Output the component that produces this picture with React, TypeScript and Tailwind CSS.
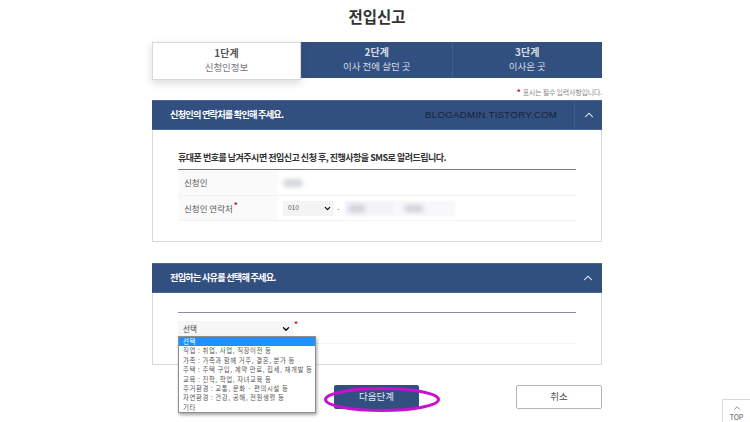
import { ChevronDown, ChevronUp } from "lucide-react"

const font = "font-['Noto_Sans_CJK_KR','Noto_Sans',sans-serif]"

const reasons = [
  "직업 : 취업, 사업, 직장이전 등",
  "가족 : 가족과 함께 거주, 결혼, 분가 등",
  "주택 : 주택 구입, 계약 만료, 집세, 재개발 등",
  "교육 : 진학, 학업, 자녀교육 등",
  "주거환경 : 교통, 문화 · 편의시설 등",
  "자연환경 : 건강, 공해, 전원생활 등",
  "기타",
]

function SectionHeader({ title, toggleLine }: { title: string; toggleLine?: boolean }) {
  return (
    <div className="flex h-[30px] items-center justify-between bg-[#32507f] pl-[18px] border-y border-[#4a6592]">
      <span className="text-[9.2px] font-bold tracking-[-0.8px] text-white">{title}</span>
      <div className={`flex h-full w-[28px] items-center justify-center ${toggleLine ? "border-l border-[#3f5c8a]" : ""}`}>
        <ChevronUp className="h-[14px] w-[14px] text-white" strokeWidth={1.8} />
      </div>
    </div>
  )
}

function Tab({ step, label }: { step: string; label: string }) {
  return (
    <div className="flex h-[36px] flex-1 flex-col items-center justify-center border-l border-[#3f5c8a] pb-[2px] leading-[14.2px] text-[#d5dce8]">
      <span className="text-[10px] font-bold">{step}</span>
      <span className="text-[9.5px]">{label}</span>
    </div>
  )
}

export default function App() {
  return (
    <div className={`relative h-[422px] w-[750px] overflow-hidden bg-white ${font}`}>
      <div className="ml-[152px] w-[450px]">
        <h1 className="pt-[4px] text-center text-[15.5px] font-bold leading-[24px] text-[#333]">전입신고</h1>

        {/* step tabs */}
        <div className="mt-[14px] flex h-[38px] items-start">
          <div className="z-10 flex h-[38px] w-[149px] flex-col items-center justify-center border border-[#d8d8d8] bg-white pb-[2px] leading-[14.2px] shadow-[0_3px_8px_rgba(0,0,0,0.15)]">
            <span className="text-[10px] font-bold text-[#555]">1단계</span>
            <span className="text-[9.5px] text-[#777]">신청인정보</span>
          </div>
          <div className="flex flex-1 bg-[#32507f]">
            <Tab step="2단계" label="이사 전에 살던 곳" />
            <Tab step="3단계" label="이사온 곳" />
          </div>
        </div>

        <div className="mt-[6px] flex h-[13px] items-center justify-end text-[7px] tracking-[-0.2px] text-[#888]">
          <span className="mr-[2px] -translate-y-[1px] text-[8px] font-bold text-[#d0021b]">*</span>
          표시는 필수 입력사항입니다.
        </div>

        {/* contact section */}
        <section className="mt-[1px]">
          <SectionHeader title="신청인의 연락처를 확인해 주세요." toggleLine />
          <div className="h-[112px] border border-t-0 border-[#d8d8d8] bg-white px-[25px] pt-[21px]">
            <p className="text-[9px] font-bold leading-[13px] tracking-[-0.5px] text-[#333]">
              휴대폰 번호를 남겨주시면 전입신고 신청 후, 진행사항을 SMS로 알려드립니다.
            </p>
            <div className="mt-[5px] border-t border-[#6f7592]">
              <div className="flex h-[26px] items-center border-b border-[#f2f2f2]">
                <div className="flex h-full w-[100px] items-center bg-[#fafafa] pl-[6px] text-[8.5px] text-[#555]">신청인</div>
                <div className="ml-[5px] h-[8px] w-[20px] rounded-sm bg-[#d4d7dc] blur-[2px]" />
              </div>
              <div className="flex h-[25px] items-center border-b border-[#f2f2f2]">
                <div className="flex h-full w-[100px] items-center bg-[#fafafa] pl-[6px] text-[8.5px] text-[#555]">
                  신청인 연락처
                  <span className="ml-[1px] -translate-y-[3px] text-[8px] font-bold text-[#d0021b]">*</span>
                </div>
                <div className="ml-[5px] flex h-[15px] w-[51px] items-center justify-between bg-[#f4f4f4] pl-[5px] pr-[2px] text-[6.5px] text-[#555]">
                  010
                  <ChevronDown className="h-[9px] w-[9px] text-black" strokeWidth={3} />
                </div>
                <span className="mx-[3px] text-[7px] text-[#666]">-</span>
                <div className="ml-[3px] flex h-[15px] w-[50px] items-center bg-[#f2f4f7] pl-[4px] blur-[1px]">
                  <div className="h-[7px] w-[16px] bg-[#cdd1d8] blur-[2px]" />
                </div>
                <div className="flex h-[15px] w-[60px] items-center bg-[#f7f8fa] pl-[10px] blur-[1px]">
                  <div className="h-[7px] w-[18px] bg-[#cdd1d8] blur-[2px]" />
                </div>
              </div>
            </div>
          </div>
        </section>

        {/* reason section */}
        <section className="mt-[21px]">
          <SectionHeader title="전입하는 사유를 선택해 주세요." />
          <div className="h-[72px] border border-t-0 border-[#d8d8d8] bg-white px-[25px] pt-[19px]">
            <div className="border-t border-[#8a8aa5]" />
            <div className="mt-[8px] flex h-[23px] items-start border-b border-[#f5f5f5]">
              <div className="flex h-[15px] w-[115px] items-center justify-between bg-[#f6f6f6] pl-[5px] pr-[2px] text-[7.5px] text-[#444]">
                선택
                <ChevronDown className="h-[10px] w-[10px] text-black" strokeWidth={3} />
              </div>
              <span className="ml-[1px] -translate-y-[3px] text-[8px] font-bold text-[#d0021b]">*</span>
            </div>
          </div>
        </section>

        {/* buttons */}
        <div className="mt-[20px] flex h-[24px] justify-end">
          <button className="flex h-[24px] w-[85px] items-center justify-center rounded-[2px] bg-[#32507f] pb-[2px] text-[9.5px] text-[#e6ebf3]">
            다음단계
          </button>
          <button className="ml-[97px] flex h-[24px] w-[86px] items-center justify-center rounded-[2px] border border-[#b5b5b5] bg-white pb-[2px] text-[9.5px] text-[#555]">
            취소
          </button>
        </div>
      </div>

      {/* open dropdown */}
      <ul className="absolute left-[178px] top-[336px] w-[138px] border border-[#8f8f8f] bg-white text-[6.4px] leading-[9.4px] tracking-[0.6px] text-[#555] shadow-[1px_2px_3px_rgba(0,0,0,0.35)]">
        <li className="bg-[#1e90ff] pl-[4px] text-white">선택</li>
        {reasons.map((r) => (
          <li key={r} className="whitespace-nowrap pl-[4px]">{r}</li>
        ))}
      </ul>

      {/* blog watermark */}
      <span className="absolute left-[425px] top-[108px] font-['Liberation_Sans',sans-serif] text-[9.8px] leading-[13px] tracking-[0.2px] text-[#16233c]">
        BLOGADMIN.TISTORY.COM
      </span>

      {/* hand-drawn highlight */}
      <svg className="absolute left-[322px] top-[385px]" width="120" height="29" viewBox="0 0 120 29" fill="none">
        <ellipse cx="60" cy="14.5" rx="56.5" ry="11" stroke="#c80fd2" strokeWidth="3" />
      </svg>

      {/* back to top */}
      <div className="absolute left-[722px] top-[399px] flex h-[23px] w-[28px] flex-col items-center border-l border-t border-[#d8d8d8] bg-white pt-[3px] text-[7px] leading-[8px] text-[#555]">
        <ChevronUp className="h-[10px] w-[10px]" strokeWidth={1.5} />
        TOP
      </div>
    </div>
  )
}
